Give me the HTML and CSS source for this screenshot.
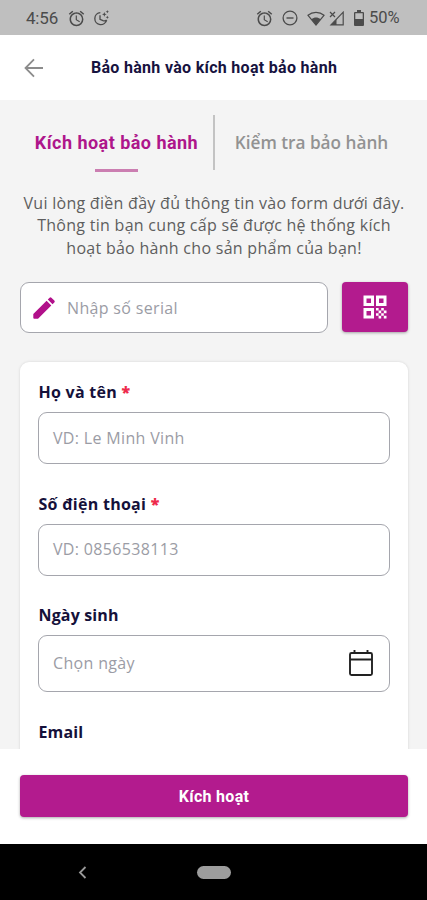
FILE: index.html
```html
<!DOCTYPE html>
<html lang="vi">
<head>
<meta charset="utf-8">
<title>Kích hoạt bảo hành</title>
<link rel="stylesheet" href="styles.css">
</head>
<body>
<div class="screen">
  <div class="status">
    <span class="clock">4:56</span>
    <svg class="i-alarm" width="17" height="17" viewBox="1 1 22 22"><path d="M22 5.72l-4.6-3.86-1.29 1.53 4.6 3.86L22 5.72zM7.88 3.39L6.6 1.86 2 5.71l1.29 1.53 4.59-3.85zM12.5 8H11v6l4.75 2.85.75-1.23-4-2.37V8zM12 4c-4.97 0-9 4.03-9 9s4.02 9 9 9a9 9 0 000-18zm0 16c-3.87 0-7-3.13-7-7s3.13-7 7-7 7 3.13 7 7-3.13 7-7 7z"/></svg>
    <svg class="i-moon" width="16" height="16" viewBox="0 0 24 24"><path d="M11 4A9 9 0 1 0 20.500 15M10.500 8v6l4.500 2q3 1 5.500-1" fill="none" stroke="#4b4b4b" stroke-width="2"/><path d="M17 3l1 2.500 2.500 1-2.500 1-1 2.500-1-2.500-2.500-1 2.500-1zM21.500 0l.7 1.800 1.800.7-1.800.7-.7 1.800-.7-1.800-1.800-.7 1.800-.7zM21.500 8.500l.7 1.800 1.800.7-1.800.7-.7 1.800-.7-1.800-1.800-.7 1.800-.7z"/></svg>
    <span class="grow"></span>
    <svg class="i-alarm2" width="17" height="17" viewBox="1 1 22 22"><path d="M22 5.72l-4.6-3.86-1.29 1.53 4.6 3.86L22 5.72zM7.88 3.39L6.6 1.86 2 5.71l1.29 1.53 4.59-3.85zM12.5 8H11v6l4.75 2.85.75-1.23-4-2.37V8zM12 4c-4.97 0-9 4.03-9 9s4.02 9 9 9a9 9 0 000-18zm0 16c-3.87 0-7-3.13-7-7s3.13-7 7-7 7 3.13 7 7-3.13 7-7 7z"/></svg>
    <svg class="i-dnd" width="16" height="16" viewBox="0 0 16 16"><circle cx="8" cy="8" r="6.900" fill="none" stroke="#4b4b4b" stroke-width="1.300"/><path d="M4.500 7.300h7v1.400h-7z"/></svg>
    <svg class="i-wifi" width="18" height="15" viewBox="0 0 18 15"><path d="M1 4.300C5.500.4 12.500.4 17 4.300L9 14z" fill="none" stroke="#4b4b4b" stroke-width="1.200"/><path d="M4.500 8.200c2.500-2.200 6.500-2.200 9 0L9 14z"/></svg>
    <svg class="i-signal" width="16" height="15" viewBox="0 0 16 15"><path d="M14.200 1.200v12.600H2zM1 1l5 5M6 1L1 6" fill="none" stroke="#4b4b4b" stroke-width="1.200"/><path d="M7.500 8.200V14H2z"/></svg>
    <svg class="i-battery" width="10" height="16" viewBox="0 0 10 16"><path fill-rule="evenodd" d="M3 0h4v2h2q1 0 1 1v12q0 1-1 1H1q-1 0-1-1V3q0-1 1-1h2zM1.300 3.300V9h7.400V3.300z"/></svg>
    <span class="percent">50%</span>
  </div>

  <header class="header">
    <svg class="back" width="20" height="20" viewBox="0 0 20 20"><path d="M19 10H2M10 1.300L1.500 10l8.500 8.700" fill="none" stroke="#8c8c8c" stroke-width="1.800"/></svg>
    <h1 class="title">Bảo hành vào kích hoạt bảo hành</h1>
  </header>

  <main class="content">
    <nav class="tabs">
      <div class="tab active"><span class="tab-text">Kích hoạt bảo hành</span><i class="underline"></i></div>
      <div class="tab other"><span class="tab-text">Kiểm tra bảo hành</span></div>
    </nav>
    <p class="intro">Vui lòng điền đầy đủ thông tin vào form dưới đây.<br>Thông tin bạn cung cấp sẽ được hệ thống kích<br>hoạt bảo hành cho sản phẩm của bạn!</p>

    <div class="serial-row">
      <div class="field serial">
        <svg width="22" height="22" viewBox="0 0 22 22"><path fill="#b1108a" d="M.3 17L13.600 3.700l4.700 4.700L5 21.700H1.300q-1 0-1-1zM14.800 2.500L16.600.7q.9-.9 1.800 0l2.900 2.900q.9.900 0 1.800l-1.800 1.800z"/></svg>
        <span class="ph">Nhập số serial</span>
      </div>
      <div class="qr">
        <svg width="24" height="24" viewBox="0 0 24 24" fill="#fff"><path fill-rule="evenodd" d="M.5.500h10.500v10.500H.500zM3.500 3.500v4.500h4.500V3.500zM13 .500h10.500v10.500H13zM16 3.500v4.500h4.500V3.500zM.5 13h10.500v10.500H.500zM3.500 16v4.500h4.500V16z"/><path d="M13 13h2.600v2.600H13zM18.200 13h2.600v2.600h-2.600zM15.600 15.600h2.600v2.600h-2.600zM20.800 15.600h2.700v2.600h-2.700zM13 18.200h2.600v2.600H13zM18.200 18.200h2.600v2.600h-2.600zM15.600 20.800h2.600v2.700h-2.600zM20.800 20.800h2.700v2.700h-2.700z"/></svg>
      </div>
    </div>

    <section class="card">
      <div class="group">
        <div class="label">Họ và tên <b>*</b></div>
        <div class="field"><span class="ph">VD: Le Minh Vinh</span></div>
      </div>
      <div class="group">
        <div class="label">Số điện thoại <b>*</b></div>
        <div class="field"><span class="ph">VD: 0856538113</span></div>
      </div>
      <div class="group">
        <div class="label birth">Ngày sinh</div>
        <div class="field date"><span class="ph">Chọn ngày</span>
          <svg width="26" height="28" viewBox="0 0 26 28"><path d="M3.500 4h19q1.500 0 1.500 1.500v19q0 1.500-1.500 1.500h-19Q2 26 2 24.500v-19Q2 4 3.500 4zM2 10.500h22M6.500 1v3M19.500 1v3" fill="none" stroke="#222" stroke-width="1.900"/></svg>
        </div>
      </div>
      <div class="label birth">Email</div>
    </section>
  </main>

  <footer class="footer"><div class="submit">Kích hoạt</div></footer>
  <div class="navbar">
    <svg width="9" height="13" viewBox="0 0 9 13"><path d="M7.500 1L2 6.500 7.500 12" fill="none" stroke="#999" stroke-width="1.800"/></svg>
    <i class="pill"></i>
  </div>
</div>
</body>
</html>
```
FILE: styles.css
```css
* { box-sizing: border-box; }
body { margin: 0; font-family: "Open Sans", "Noto Sans", sans-serif; }
.screen { width: 427px; height: 900px; display: flex; flex-direction: column; overflow: hidden; background: #fff; }
svg { display: block; flex: none; }

.status { height: 35px; flex: none; background: #bfbfbf; display: flex; align-items: center; padding: 1px 27px 0 26px; font: 17px/20px Roboto, sans-serif; color: #4b4b4b; fill: #4b4b4b; }
.grow { flex: 1; }
.clock { width: 42px; letter-spacing: -0.2px; }
.i-moon { margin-left: 8px; }
.i-dnd { margin-left: 9px; }
.i-wifi { margin-left: 9px; }
.i-signal { margin-left: 4px; }
.i-battery { margin-left: 9px; }
.percent { width: 31px; margin-left: 5px; font-size: 16.5px; white-space: nowrap; }

.header { height: 65px; flex: none; display: flex; align-items: center; padding: 1px 0 0 24px; }
.title { margin: 0 0 0 47px; font: 700 16px/20px Roboto, sans-serif; letter-spacing: 0.3px; color: #17133f; white-space: nowrap; }

.content { height: 649px; flex: none; overflow: hidden; background: #f4f4f4; padding: 15px 19px 0 20px; }
.tabs { display: flex; height: 55px; }
.tab { display: flex; flex-direction: column; align-items: center; padding-top: 15px; white-space: nowrap; font-weight: 700; font-size: 18px; line-height: 25px; }
.active { width: 195px; border-right: 2px solid #c3c3c3; color: #ae168b; font-family: Roboto, sans-serif; letter-spacing: 0.46px; }
.other { flex: 1; color: #929292; font-size: 17.2px; font-weight: 600; }
.underline { width: 43px; height: 3px; flex: none; margin-top: 14px; background: #cb7eb1; }
.intro { margin: 22px -10px 0; text-align: center; font-size: 16px; line-height: 22.4px; letter-spacing: 0.28px; color: #5e5e5e; white-space: nowrap; }

.serial-row { display: flex; gap: 14px; margin-top: 23px; }
.field { height: 52px; border: 1px solid #a5a6ad; border-radius: 9px; background: #fff; display: flex; align-items: center; padding: 0 14px 1px; }
.serial { flex: 1; height: 51px; padding: 0 12px; gap: 12px; }
.ph { font-size: 16px; letter-spacing: 0.33px; color: #9b9ca5; white-space: nowrap; }
.qr { width: 66px; height: 50px; border-radius: 4px; background: #b31b8e; box-shadow: 0 1px 3px #0005; display: flex; align-items: center; justify-content: center; }

.card { margin-top: 29px; height: 420px; background: #fff; border-radius: 9px; box-shadow: 0 0 3px #0002; padding: 18px 18px 0; }
.group { margin-bottom: 27.5px; }
.label { height: 24px; margin-bottom: 8px; padding-left: 0.5px; font-size: 16px; font-weight: 700; line-height: 24px; letter-spacing: 0.27px; color: #15113a; white-space: nowrap; }
.label b { color: #ee2a4b; }
.birth { letter-spacing: 0.15px; }
.date { height: 57px; justify-content: space-between; padding-right: 15px; }

.footer { height: 95px; flex: none; padding: 26px 19px 0 20px; background: #fff; }
.submit { height: 42px; border-radius: 4px; background: #b31b8e; box-shadow: 0 1px 3px #0005; color: #fff; text-align: center; font: 700 16px/43px Roboto, sans-serif; letter-spacing: 0.3px; }
.navbar { height: 56px; flex: none; background: #000; display: flex; align-items: center; padding-left: 78px; }
.pill { width: 34px; height: 13px; border-radius: 7px; background: #9d9d9d; margin-left: 110px; }
```
